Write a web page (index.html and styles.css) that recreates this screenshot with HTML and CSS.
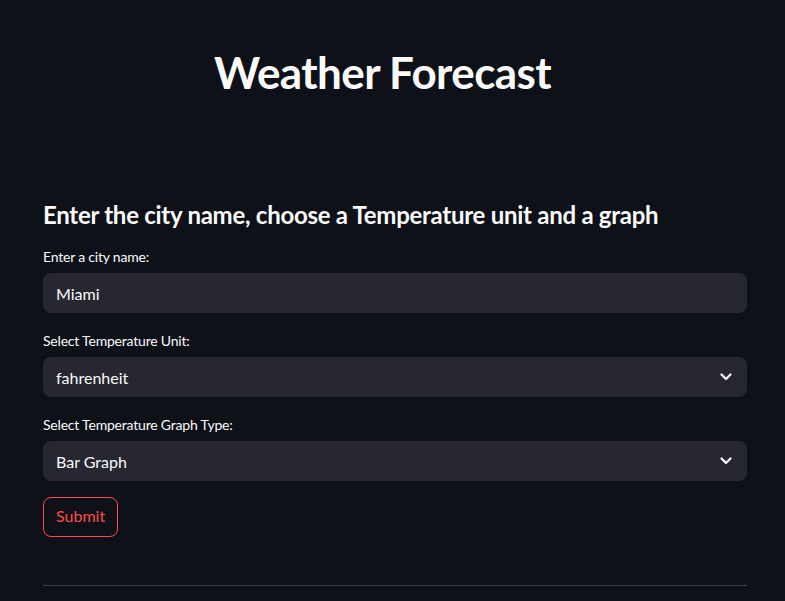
FILE: index.html
```html
<!DOCTYPE html>
<html>
<head>
<meta charset="utf-8">
<link rel="stylesheet" href="styles.css">
</head>
<body>
<main class="main">
  <h1 class="title">Weather Forecast</h1>
  <h3 class="subtitle">Enter the city name, choose a Temperature unit and a graph</h3>
  <div class="field">
    <label class="label">Enter a city name:</label>
    <div class="box">Miami</div>
  </div>
  <div class="field">
    <label class="label">Select Temperature Unit:</label>
    <div class="box select">
      <span>fahrenheit</span>
      <svg class="chev" width="12" height="8" viewBox="0 0 12 8"><path d="M1.5 1.5 L6 6 L10.5 1.5" fill="none" stroke="#fafafa" stroke-width="2.2" stroke-linecap="round" stroke-linejoin="round"/></svg>
    </div>
  </div>
  <div class="field">
    <label class="label">Select Temperature Graph Type:</label>
    <div class="box select">
      <span>Bar Graph</span>
      <svg class="chev" width="12" height="8" viewBox="0 0 12 8"><path d="M1.5 1.5 L6 6 L10.5 1.5" fill="none" stroke="#fafafa" stroke-width="2.2" stroke-linecap="round" stroke-linejoin="round"/></svg>
    </div>
  </div>
  <div class="actions">
    <button class="btn">Submit</button>
  </div>
  <hr class="divider">
</main>
</body>
</html>
```
FILE: styles.css
```css
html, body {
  margin: 0;
  padding: 0;
  background: #0e1117;
  color: #fafafa;
  font-family: "Lato", "Noto Sans", sans-serif;
  height: 601px;
  overflow: hidden;
}
.main {
  padding: 0 38px 0 43px;
  display: flex;
  flex-direction: column;
}
.title {
  margin: 46px 0 0;
  padding-right: 25px;
  font-size: 44px;
  line-height: 53px;
  font-weight: 700;
  letter-spacing: -0.6px;
  text-align: center;
}
.subtitle {
  margin: 101px 0 0;
  font-size: 24px;
  line-height: 29px;
  font-weight: 700;
  letter-spacing: -0.27px;
}
.field {
  display: flex;
  flex-direction: column;
}
.field:first-of-type { margin-top: 19px; }
.field + .field { margin-top: 19px; }
.label {
  font-size: 14px;
  line-height: 18px;
  margin-bottom: 7px;
  letter-spacing: -0.2px;
}
.box {
  height: 40px;
  box-sizing: border-box;
  background: #262730;
  border-radius: 8px;
  padding: 0 14px 0 13px;
  display: flex;
  align-items: center;
  font-size: 16px;
}
.select { justify-content: space-between; padding-right: 15px; }
.chev { display: block; }
.actions {
  margin-top: 16px;
  display: flex;
}
.btn {
  height: 40px;
  padding: 0 12px;
  background: transparent;
  border: 1px solid #ff4b4b;
  border-radius: 8px;
  color: #ff4b4b;
  font-family: inherit;
  font-size: 16px;
  line-height: 1;
  padding-bottom: 2px;
}
.divider {
  margin: 48px 0 0;
  border: none;
  border-top: 1px solid rgba(250, 250, 250, 0.2);
  height: 0;
}
```
